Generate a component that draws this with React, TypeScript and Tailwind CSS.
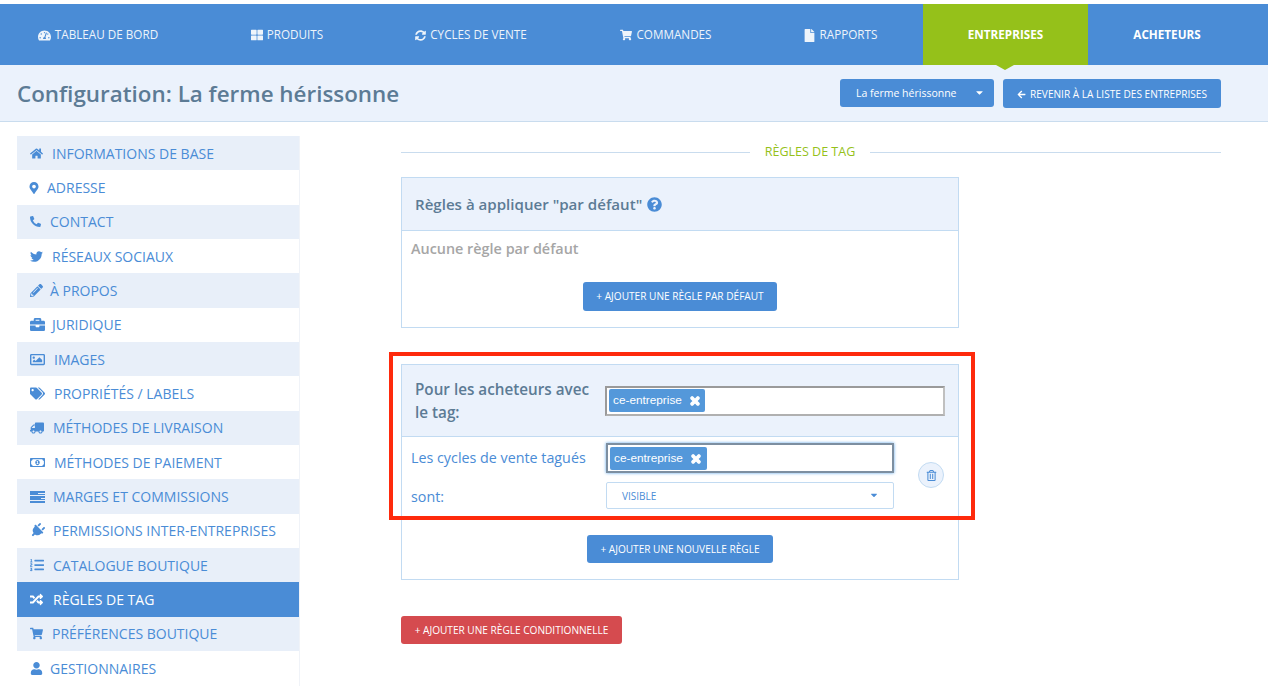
import type { ReactNode } from 'react';
import { FaArrowLeft, FaBriefcase, FaCaretDown, FaFile, FaHome, FaListOl, FaMapMarkerAlt, FaPencilAlt, FaPhoneAlt, FaPlug, FaQuestionCircle, FaRandom, FaRegImage, FaRegMoneyBillAlt, FaRegTrashAlt, FaShoppingCart, FaSyncAlt, FaTachometerAlt, FaTags, FaThLarge, FaTimes, FaTruck, FaTwitter, FaUser } from 'react-icons/fa';

const BarsIcon = () => (
  <svg viewBox="0 0 15 12" className="h-[12px] w-[15px] fill-current">
    <path d="M0 0h15v2H8v1h7v1H0zM0 5h15v2H11v1h4v1H0zM0 10h15v2H0z" />
  </svg>
);

const tabs = [
  { label: 'TABLEAU DE BORD', icon: <FaTachometerAlt />, width: 'w-[196px]' },
  { label: 'PRODUITS', icon: <FaThLarge className="text-[12px]" />, width: 'w-[182px]' },
  { label: 'CYCLES DE VENTE', icon: <FaSyncAlt className="text-[11px]" />, width: 'w-[186px]' },
  { label: 'COMMANDES', icon: <FaShoppingCart className="text-[12px]" />, width: 'w-[204px]' },
  { label: 'RAPPORTS', icon: <FaFile />, width: 'w-[155px] pr-[11px]' },
];

const menu = [
  { label: 'INFORMATIONS DE BASE', icon: <FaHome />, box: 'w-[22px]' },
  { label: 'ADRESSE', icon: <FaMapMarkerAlt className="-ml-[2px] text-[12px]" />, box: 'w-[17px]' },
  { label: 'CONTACT', icon: <FaPhoneAlt className="text-[11px]" />, box: 'w-[20px]' },
  { label: 'RÉSEAUX SOCIAUX', icon: <FaTwitter />, box: 'w-[22px]' },
  { label: 'À PROPOS', icon: <FaPencilAlt />, box: 'w-[20px]' },
  { label: 'JURIDIQUE', icon: <FaBriefcase className="text-[15px]" />, box: 'w-[22px]' },
  { label: 'IMAGES', icon: <FaRegImage className="text-[15px]" />, box: 'w-[24px]' },
  { label: 'PROPRIÉTÉS / LABELS', icon: <FaTags className="text-[15px]" />, box: 'w-[24px]' },
  { label: 'MÉTHODES DE LIVRAISON', icon: <FaTruck className="text-[14px] -scale-x-100" />, box: 'w-[23px]' },
  { label: 'MÉTHODES DE PAIEMENT', icon: <FaRegMoneyBillAlt className="text-[15px]" />, box: 'w-[24px]' },
  { label: 'MARGES ET COMMISSIONS', icon: <BarsIcon />, box: 'w-[23px]' },
  { label: 'PERMISSIONS INTER-ENTREPRISES', icon: <FaPlug className="rotate-45 text-[15px]" />, box: 'w-[23px]' },
  { label: 'CATALOGUE BOUTIQUE', icon: <FaListOl className="text-[14px]" />, box: 'w-[23px]' },
  { label: 'RÈGLES DE TAG', icon: <FaRandom />, box: 'w-[23px]', active: true },
  { label: 'PRÉFÉRENCES BOUTIQUE', icon: <FaShoppingCart />, box: 'w-[22px]' },
  { label: 'GESTIONNAIRES', icon: <FaUser />, box: 'w-[20px]' },
];

const Tag = ({ className }: { className: string }) => (
  <span className={`flex items-center gap-[7px] rounded-[2px] bg-[#5498da] pl-1 pt-px text-[11.8px] text-white font-['Liberation_Sans',sans-serif] ${className}`}>
    ce-entreprise
    <FaTimes className="text-[12px]" stroke="currentColor" strokeWidth={60} />
  </span>
);

const Button = ({ className, children }: { className: string; children: ReactNode }) => (
  <button className={`flex items-center justify-center rounded-[3px] pt-px text-[10.1px] text-white ${className}`}>{children}</button>
);

export default function App() {
  return (
    <div className="h-[690px] overflow-hidden bg-white pt-[4px] font-['Open_Sans',sans-serif] text-[#4a8cd6]">
      <nav className="flex h-[61px] bg-[#4a8cd6] pt-px text-[11.7px] text-[#eef4fb]">
        {tabs.map((tab) => (
          <div key={tab.label} className={`flex items-center justify-center gap-[4px] ${tab.width}`}>
            <span className="text-[13px]">{tab.icon}</span>
            {tab.label}
          </div>
        ))}
        <div className="relative -mt-px flex w-[165px] items-center justify-center bg-[#95c11a] pt-px font-bold text-white">
          ENTREPRISES
          <span className="absolute -bottom-[5px] left-[73px] border-x-[9px] border-t-[5px] border-x-transparent border-t-[#95c11a]" />
        </div>
        <div className="flex w-[158px] items-center justify-center font-bold text-white">ACHETEURS</div>
      </nav>

      <header className="flex h-[57px] items-center justify-between border-b border-[#c9dcee] bg-[#ebf2fc] pl-[17px] pr-[47px] pt-px">
        <h1 className="text-[22.4px] font-semibold text-[#5c7b95]">Configuration: La ferme hérissonne</h1>
        <div className="flex gap-[9px]">
          <Button className="h-[28px] w-[154px] justify-start gap-[18px] bg-[#4a8cd6] pl-4 !pt-[2px] !text-[10.5px]">
            La ferme hérissonne
            <FaCaretDown className="-mt-[4px] text-[11px]" />
          </Button>
          <Button className="h-[29px] w-[218px] gap-[4px] bg-[#4a8cd6] !pt-[2px]">
            <FaArrowLeft className="text-[9px]" />
            REVENIR À LA LISTE DES ENTREPRISES
          </Button>
        </div>
      </header>

      <div className="flex">
        <aside className="ml-[17px] mt-[14px] w-[283px] border-r border-[#f0f3f8]">
          {menu.map((item, i) => (
            <div
              key={item.label}
              className={`flex h-[34.35px] items-center pl-[13px] text-[14px] ${item.active ? 'bg-[#4a8cd6] text-white' : i % 2 === 0 ? 'bg-[#e8eff9]' : ''}`}
            >
              <span className={`text-[13px] ${item.box}`}>{item.icon}</span>
              {item.label}
            </div>
          ))}
        </aside>

        <main className="ml-[101px] w-[820px] pt-[21px]">
          <div className="flex h-[18px] items-center">
            <span className="h-px w-[349px] bg-[#c9dcee]" />
            <span className="flex-1 pt-px text-center text-[12.5px] font-medium text-[#95c11a]">RÈGLES DE TAG</span>
            <span className="h-px w-[351px] bg-[#c9dcee]" />
          </div>

          <section className="mt-[16px] h-[151px] w-[558px] border border-[#c2dbf2]">
            <div className="flex h-[53px] items-center gap-[5px] border-b border-[#c2dbf2] bg-[#ebf2fc] pl-[13px] text-[15.1px] font-semibold text-[#5c7b95]">
              Règles à appliquer "par défaut"
              <FaQuestionCircle className="text-[15px] text-[#4a8cd6]" />
            </div>
            <p className="pl-[9px] pt-[7px] text-[14.4px] font-semibold text-[#a6a6a6]">Aucune règle par défaut</p>
            <div className="mt-[22px] flex justify-center">
              <Button className="h-[29px] w-[194px] bg-[#4a8cd6]">+ AJOUTER UNE RÈGLE PAR DÉFAUT</Button>
            </div>
          </section>

          <div className="relative mt-[36px] w-[558px]">
            <section className="h-[216px] border border-[#c2dbf2]">
              <div className="flex h-[72px] items-center border-b border-[#c2dbf2] bg-[#ebf2fc] pl-[13px]">
                <h2 className="mr-[10px] w-[180px] text-[15.25px] font-semibold leading-[23px] text-[#5c7b95]">Pour les acheteurs avec le tag:</h2>
                <div className="flex h-[30px] w-[340px] items-center border-2 border-[#9a9a9a] border-b-[#b0b0b0] border-r-[#c0c0c0] bg-white pl-[2px]">
                  <Tag className="h-[23px] w-[96px]" />
                </div>
              </div>
              <div className="flex h-[87px] pl-[9px] text-[14.3px]">
                <div className="w-[195px] pt-[10px]">
                  <p>Les cycles de vente tagués</p>
                  <p className="mt-[18px]">sont:</p>
                </div>
                <div className="w-[288px] pt-[6px]">
                  <div className="flex h-[30px] items-center border-2 border-[#7d8fa1] bg-white pl-[2px] shadow-[0_0_3px_#5ea6ea]">
                    <Tag className="h-[23px] w-[97px]" />
                  </div>
                  <div className="mt-[9px] flex h-[27px] items-center justify-between rounded-[2px] border border-[#c2dbf2] pl-[15px] pr-[14px] pt-[2px] text-[10px]">
                    VISIBLE
                    <FaCaretDown className="-mt-[4px] text-[10px]" />
                  </div>
                </div>
                <div className="ml-[24px] mt-[25px] flex size-[26px] items-center justify-center rounded-full border border-[#c2dbf2] bg-[#ebf2fc] text-[11px]">
                  <FaRegTrashAlt />
                </div>
              </div>
              <div className="mt-[11px] flex justify-center">
                <Button className="h-[28px] w-[186px] bg-[#4a8cd6]">+ AJOUTER UNE NOUVELLE RÈGLE</Button>
              </div>
            </section>
            {/* annotation drawn over the screenshot */}
            <div className="absolute left-[-12px] top-[-12px] h-[168px] w-[586px] border-[4px] border-[#fe2a0c]" />
          </div>

          <Button className="mt-[36px] h-[28px] w-[221px] bg-[#d54b4f]">+ AJOUTER UNE RÈGLE CONDITIONNELLE</Button>
        </main>
      </div>
    </div>
  );
}
